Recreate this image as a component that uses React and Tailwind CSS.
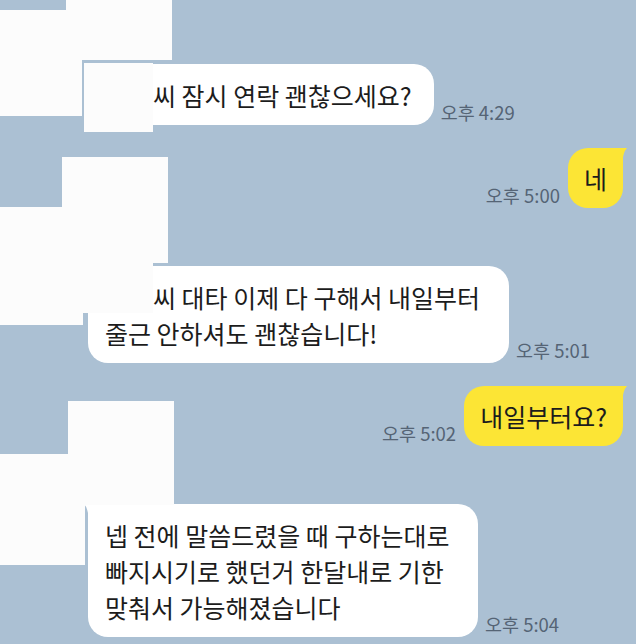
import React from "react";

const font = { fontFamily: '"Noto Sans CJK KR", "Noto Sans", sans-serif' };

// white masks that hide profile pictures and names
const masks = [
  "left-[66px] top-0 w-[106px] h-[60px]",
  "left-0 top-[10px] w-[82px] h-[106px]",
  "left-[84px] top-[63px] w-[69px] h-[69px]",
  "left-[62px] top-[157px] w-[106px] h-[106px]",
  "left-0 top-[207px] w-[83px] h-[118px]",
  "left-[83px] top-[263px] w-[70px] h-[50px]",
  "left-[68px] top-[401px] w-[106px] h-[104px]",
  "left-0 top-[454px] w-[85px] h-[111px]",
];

function Time({ children }) {
  return (
    <span className="text-[18.5px] leading-[20px] text-[#556475] whitespace-nowrap mb-[3px]">
      {children}
    </span>
  );
}

function Incoming({ time, tail, className = "", children }) {
  return (
    <div className="flex items-end gap-[7px] pl-[88px]">
      <div
        className={`relative bg-white rounded-[20px] pl-[17px] py-[12.5px] text-[25px] leading-[36px] text-[#1c1c1c] ${tail ? "rounded-tl-[6px]" : ""} ${className}`}
      >
        {tail && (
          <svg className="absolute top-0 left-[-5px]" width="18" height="16" viewBox="0 0 18 16">
            <path d="M18 0 H1 Q5 4 6 16 H18 Z" fill="#ffffff" />
          </svg>
        )}
        {children}
      </div>
      <Time>{time}</Time>
    </div>
  );
}

function Outgoing({ time, children }) {
  return (
    <div className="flex items-end justify-end gap-[8px] pr-[13px]">
      <Time>{time}</Time>
      <div className="relative bg-[#fce535] rounded-[20px] rounded-tr-[6px] px-[16px] py-[12px] text-[25px] leading-[36px] text-[#1c1c1c]">
        <svg className="absolute top-0 right-[-5px]" width="18" height="16" viewBox="0 0 18 16">
          <path d="M0 0 H17 Q13 4 12 16 H0 Z" fill="#fce535" />
        </svg>
        {children}
      </div>
    </div>
  );
}

export default function App() {
  return (
    <div className="relative w-[636px] h-[644px] overflow-hidden bg-[#abc0d3]" style={font}>
      <div className="flex flex-col pt-[64px]">
        <Incoming time="오후 4:29" tail className="pr-[22px]">
          <span className="inline-block w-[48px]" />씨 잠시 연락 괜찮으세요?
        </Incoming>

        <div className="mt-[23px]">
          <Outgoing time="오후 5:00">네</Outgoing>
        </div>

        <div className="mt-[58px]">
          <Incoming time="오후 5:01" tail className="w-[421px] pr-[17px]">
            <span className="inline-block w-[48px]" />씨 대타 이제 다 구해서 내일부터
            <br />
            줄근 안하셔도 괜찮습니다!
          </Incoming>
        </div>

        <div className="mt-[23px]">
          <Outgoing time="오후 5:02">내일부터요?</Outgoing>
        </div>

        <div className="mt-[58px]">
          <Incoming time="오후 5:04" tail className="w-[390px] pr-[17px]">
            넵 전에 말씀드렸을 때 구하는대로
            <br />
            빠지시기로 했던거 한달내로 기한
            <br />
            맞춰서 가능해졌습니다
          </Incoming>
        </div>
      </div>

      {masks.map((m, i) => (
        <div key={i} className={`absolute z-10 bg-[#fcfcfc] ${m}`} />
      ))}
    </div>
  );
}
